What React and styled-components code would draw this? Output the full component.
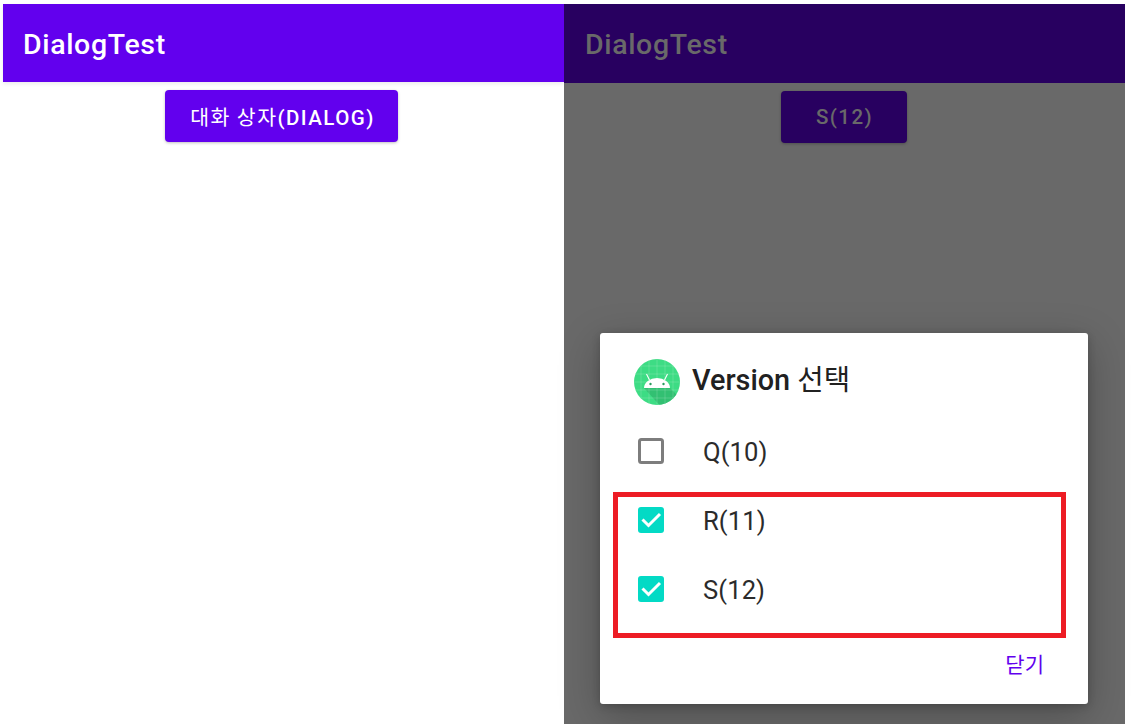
import styled, { createGlobalStyle } from 'styled-components';

const GlobalStyle = createGlobalStyle`
  html, body { margin: 0; padding: 0; background: #fff; }
  body { font-family: Roboto, "Noto Sans CJK KR", sans-serif; overflow: hidden; }
`;

const Page = styled.div`
  display: flex;
  width: 1131px;
  height: 724px;
  padding: 4px 6px 0 3px;
  box-sizing: border-box;
`;

const Phone = styled.div`
  position: relative;
  display: flex;
  flex-direction: column;
  width: 561px;
  background: ${({ $dim }) => ($dim ? '#696969' : '#fff')};
`;

const AppBar = styled.div`
  display: flex;
  align-items: center;
  height: ${({ $dim }) => ($dim ? '79px' : '78px')};
  box-sizing: border-box;
  padding-top: 2px;
  padding-left: ${({ $dim }) => ($dim ? '21px' : '20px')};
  background: ${({ $dim }) => ($dim ? '#280060' : '#6200ee')};
  color: ${({ $dim }) => ($dim ? '#696969' : '#fff')};
  font-size: 28.5px;
  font-weight: 500;
  letter-spacing: 0.65px;
  box-shadow: ${({ $dim }) => ($dim ? 'none' : '0 2px 4px rgba(0,0,0,.08)')};
`;

const Content = styled.div`
  display: flex;
  justify-content: center;
  padding-top: 8px;
`;

const PushButton = styled.button`
  height: 52px;
  width: ${({ $dim }) => ($dim ? '126px' : '233px')};
  margin-left: ${({ $dim }) => ($dim ? '-2px' : '-4px')};
  padding: 0 0 0 2px;
  border: none;
  border-radius: 4px;
  background: ${({ $dim }) => ($dim ? '#280060' : '#6200ee')};
  color: ${({ $dim }) => ($dim ? '#696969' : '#fff')};
  font-family: Roboto, "Noto Sans CJK KR", sans-serif;
  font-size: 20.5px;
  font-weight: 500;
  letter-spacing: 1.45px;
  box-shadow: 0 1px 3px rgba(0,0,0,.25);
`;

const Hangul = styled.span`
  font-family: "Noto Sans CJK KR", sans-serif;
  font-weight: 400;
`;

const Dialog = styled.div`
  position: absolute;
  left: 36px;
  top: 329px;
  width: 488px;
  height: 371px;
  display: flex;
  flex-direction: column;
  background: #fff;
  border-radius: 3px;
  box-shadow: 0 12px 40px rgba(0,0,0,.25), 0 2px 8px rgba(0,0,0,.2);
`;

const TitleRow = styled.div`
  display: flex;
  align-items: center;
  gap: 12px;
  padding: 26px 0 0 34px;
`;

const Title = styled.span`
  margin-top: -9px;
  font-size: 28.8px;
  font-weight: 500;
  color: #212121;
`;

const OptionList = styled.div`
  display: flex;
  flex-direction: column;
  padding-top: 13px;
`;

const Option = styled.div`
  display: flex;
  align-items: center;
  height: 69px;
  padding-left: 38px;
  gap: 39px;
  font-size: 25.6px;
  letter-spacing: 0.1px;
  color: #2b2b2b;
`;

const OptionLabel = styled.span`
  margin-top: -2px;
`;

const BoxIcon = styled.svg`
  margin-top: -4px;
`;

const Actions = styled.div`
  display: flex;
  justify-content: flex-end;
  padding: 23px 44px 0 0;
`;

const TextButton = styled.span`
  font-family: "Noto Sans CJK KR", sans-serif;
  font-size: 21px;
  line-height: 30px;
  color: #6200ee;
`;

const Highlight = styled.div`
  position: absolute;
  left: 49px;
  top: 488px;
  width: 453px;
  height: 146px;
  box-sizing: border-box;
  border: 5px solid #ed1c24;
`;

function AndroidIcon() {
  return (
    <svg width="46" height="46" viewBox="0 0 46 46">
      <defs>
        <clipPath id="disc"><circle cx="23" cy="23" r="23" /></clipPath>
      </defs>
      <g clipPath="url(#disc)">
        <rect width="46" height="46" fill="#3ddc84" />
        <path d="M10 29h26l14 14v8H30z" fill="#2fb76c" opacity=".75" />
        <path d="M7 0v46M15 0v46M23 0v46M31 0v46M39 0v46M0 7h46M0 15h46M0 23h46M0 31h46M0 39h46" stroke="#fff" strokeOpacity=".16" strokeWidth="1" />
        <path d="M10 29a13 10 0 0 1 26 0z" fill="#fff" />
        <path d="M15.5 21l-3-6M30.5 21l3-6" stroke="#fff" strokeWidth="1.1" />
        <circle cx="16.5" cy="25" r="1.2" fill="#2a9d5f" />
        <circle cx="29.5" cy="25" r="1.2" fill="#2a9d5f" />
      </g>
    </svg>
  );
}

function CheckBox({ checked }) {
  if (!checked) {
    return (
      <BoxIcon width="26" height="26" viewBox="0 0 26 26">
        <rect x="1.5" y="1.5" width="23" height="23" rx="2" fill="none" stroke="#7d7d7d" strokeWidth="3" />
      </BoxIcon>
    );
  }
  return (
    <BoxIcon width="26" height="26" viewBox="0 0 26 26">
      <rect width="26" height="26" rx="3" fill="#03dac5" />
      <path d="M4.5 12.5l6 6L22 7" fill="none" stroke="#fff" strokeWidth="3" />
    </BoxIcon>
  );
}

const options = [
  { label: 'Q(10)', checked: false },
  { label: 'R(11)', checked: true },
  { label: 'S(12)', checked: true },
];

export default function App() {
  return (
    <Page>
      <GlobalStyle />
      <Phone>
        <AppBar>DialogTest</AppBar>
        <Content>
          <PushButton><Hangul>대화 상자</Hangul>(DIALOG)</PushButton>
        </Content>
      </Phone>
      <Phone $dim>
        <AppBar $dim>DialogTest</AppBar>
        <Content>
          <PushButton $dim>S(12)</PushButton>
        </Content>
        <Dialog>
          <TitleRow>
            <AndroidIcon />
            <Title>Version <Hangul>선택</Hangul></Title>
          </TitleRow>
          <OptionList>
            {options.map((option) => (
              <Option key={option.label}>
                <CheckBox checked={option.checked} />
                <OptionLabel>{option.label}</OptionLabel>
              </Option>
            ))}
          </OptionList>
          <Actions>
            <TextButton>닫기</TextButton>
          </Actions>
        </Dialog>
        <Highlight />
      </Phone>
    </Page>
  );
}
